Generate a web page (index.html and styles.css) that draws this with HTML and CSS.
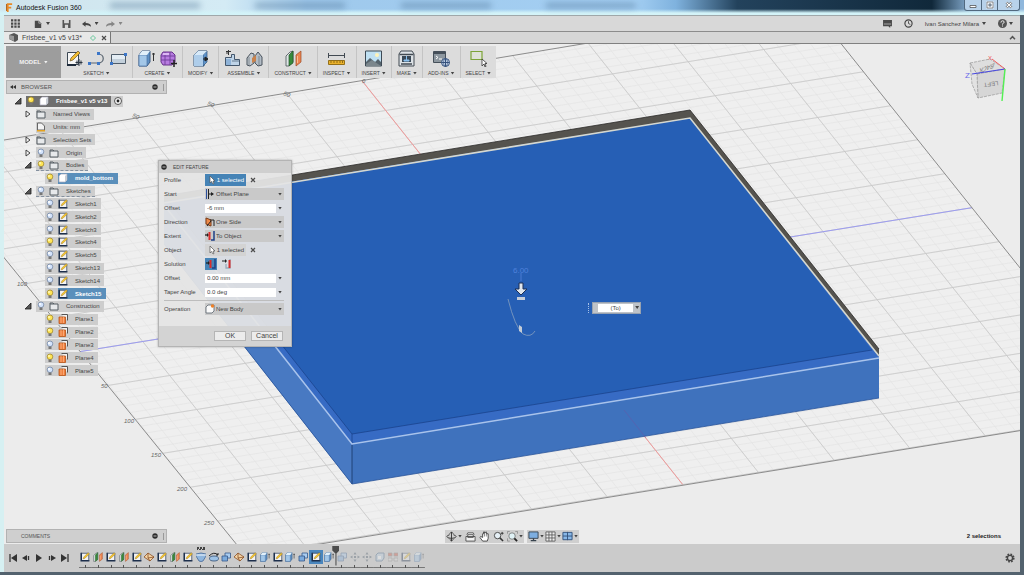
FILE: index.html
```html
<!DOCTYPE html>
<html lang="en">
<head>
	<meta charset="UTF-8">
	<title>Autodesk Fusion 360</title>
	<link rel="stylesheet" href="styles.css">
</head>

<body>

<svg class="sprite" aria-hidden="true">
	<symbol id="i-sketch" viewBox="0 0 16 16">
		<path d="M2 2h12v12H2z" fill="#f4f4f4"/><path d="M2 1v13h13" fill="none" stroke="#1d2f4c" stroke-width="2.500"/>
		<path d="M2 2h12v12" fill="none" stroke="#33435c" stroke-width="1.200"/><path d="M5 11l1-3 7-7 2 2-7 7z" fill="#f4c430" stroke="#8a6a1e" stroke-width=".6"/>
	</symbol>
	<symbol id="i-sketchbig" viewBox="0 0 17 17">
		<path d="M1.500 2.500h11v12h-11z" fill="#f6f6f6" stroke="#3c4854"/><path d="M1 15h9" stroke="#1d2a3a" stroke-width="2"/>
		<path d="M4 11l1-3 7-7 2 2-7 7z" fill="#f2bd31" stroke="#6b5422" stroke-width=".7"/>
		<path d="M13 9v7M9.500 12.500h7M11 10.500v4M15 10.500v4" stroke="#2d3742"/>
	</symbol>
	<symbol id="i-line" viewBox="0 0 17 17">
		<path d="M1 13h9c7 0 7-9 0-9" fill="none" stroke="#5a6570" stroke-width="1.200"/>
		<path d="M0 12h3v3H0zM9 12h3v3H9zM9 2h3v3H9z" fill="#3c76c8"/>
	</symbol>
	<symbol id="i-rect" viewBox="0 0 17 17">
		<path d="M1.500 4.500h14v9h-14z" fill="#e4edf4" stroke="#4e5c6a"/><path d="M2 9h13v4H2z" fill="#c3d0db"/>
		<path d="M0 12h3v3H0zM14 3h3v3h-3z" fill="#3c76c8"/>
	</symbol>
	<symbol id="i-extrude" viewBox="0 0 17 17">
		<path d="M1 5l3-4h8v11l-3 4H1z" fill="#5f90c4" stroke="#3c5c84"/><path d="M1 5h8v11H1z" fill="#a3c7e8" stroke="#4a74a4" stroke-width=".7"/>
		<path d="M1 5l3-4h8L9 5z" fill="#e2f0fa"/><path d="M15.500 3v8M14 4h3" stroke="#333"/>
	</symbol>
	<symbol id="i-form" viewBox="0 0 17 17">
		<path d="M3 2h9l3 3v7l-3 3H3l-2-3V5z" fill="#b77be0" stroke="#68338c"/>
		<path d="M1 6h14M1 10h14M5 2v13M10 2v13" stroke="#70409a" stroke-width=".9"/><path d="M3 3h6v2H3z" fill="#dcb8f4"/>
		<path d="M14 10v7M11 13.500h6" stroke="#222" stroke-width="1.500"/>
	</symbol>
	<symbol id="i-modify" viewBox="0 0 17 17">
		<path d="M2 5l4-4h9l-3 4v11H2z" fill="#5f93ca" stroke="#31547c"/><path d="M11 5l4-4v11l-4 4z" fill="#5f93ca" stroke="#31547c" stroke-width=".7"/><path d="M2 5h9v11H2z" fill="#aecdea"/>
		<path d="M2 5l4-4h9l-4 4z" fill="#d7e9f8"/><path d="M11 9h4M13 7l3 2-3 2z" stroke="#222" fill="#222"/>
	</symbol>
	<symbol id="i-assemble" viewBox="0 0 17 17">
		<path d="M1.500 7.500h6v-3h3v5h5v6h-14z" fill="#bfd4e8" stroke="#44576c"/><path d="M2 9h5v6H2z" fill="#8fb3d8"/>
		<path d="M2 1.500h5M4.500 0v5M3 1v3" stroke="#333"/><path d="M8 11h7" stroke="#44576c" stroke-width=".7"/>
	</symbol>
	<symbol id="i-joint" viewBox="0 0 17 17">
		<path d="M1 8l4-5 3 1v9l-4 3-3-1z" fill="#c3cad0" stroke="#49525c"/><path d="M9 6l3-4 4 5v8l-4 1-3-3z" fill="#b3bcc5" stroke="#49525c"/>
		<path d="M6 8l4-3v6l-4 2z" fill="#c9824c"/><path d="M3 7v8M13 6v9" stroke="#69727c" stroke-width=".7"/>
	</symbol>
	<symbol id="i-planes" viewBox="0 0 17 17">
		<path d="M1 6l4-4 3-1v11l-4 4H1z" fill="#dfe5e6" stroke="#465056" stroke-width=".8"/><path d="M4 5l4-4v12l-4 3z" fill="#378a3c" stroke="#245628" stroke-width=".7"/>
		<path d="M11 5l5-4v11l-5 4z" fill="#ec8450" stroke="#9c4b26" stroke-width=".7"/><path d="M12.500 6v7" stroke="#f8bb93"/>
	</symbol>
	<symbol id="i-measure" viewBox="0 0 17 17">
		<path d="M.500 3v5M16.500 3v5M1 5.500h15" stroke="#424a52"/><path d="M.500 10.500h16v4H.500z" fill="#eab22c" stroke="#94701a"/>
		<path d="M3 11v2M6 11v2M9 11v2M12 11v2M14.500 11v2" stroke="#6c4f10" stroke-width=".7"/>
	</symbol>
	<symbol id="i-image" viewBox="0 0 17 17">
		<path d="M.500 1h16v15H.500z" fill="#bfe0f2" stroke="#3d4a55"/><path d="M1 12l4-4 5 4 3-3 3 3v4H1z" fill="#56636c"/>
		<path d="M1 14l6-4 9 6H1z" fill="#7b868c"/><circle cx="12" cy="5" r="2" fill="#fff3b8"/>
	</symbol>
	<symbol id="i-make" viewBox="0 0 17 17">
		<path d="M1 4l2-3h11l2 3v12H1z" fill="#dde2e6" stroke="#424a52"/><path d="M1.500 4.500h14" stroke="#424a52" stroke-width="1.500"/>
		<path d="M4 6h9v6H4z" fill="#394856"/><path d="M8.500 6v4M6 10h5v1H6z" stroke="#8ac0ee" fill="#8ac0ee"/><path d="M3 14h11" stroke="#424a52" stroke-width="1.500"/>
	</symbol>
	<symbol id="i-addins" viewBox="0 0 17 17">
		<path d="M.500 1.500h12v11H.500z" fill="#8d979f" stroke="#46505a"/><path d="M1 2h11v2H1z" fill="#46505a"/>
		<path d="M3 6l2 1.500L3 9M6 9h3" stroke="#fff" fill="none"/><circle cx="12.500" cy="12.500" r="4" fill="#ccdcf0" stroke="#36527c"/>
		<path d="M8.500 12.500h8M12.500 8.500v8" stroke="#36527c"/><ellipse cx="12.500" cy="12.500" rx="2" ry="4" fill="none" stroke="#36527c" stroke-width=".7"/>
	</symbol>
	<symbol id="i-select" viewBox="0 0 17 17">
		<path d="M1 1.500h11v8H1z" fill="#e4eccf" fill-opacity=".4" stroke="#7da437" stroke-width="1.200"/><path d="M12 9v7l2-2 1 3 1-.500-1-3h2z" fill="#fff" stroke="#333" stroke-width=".8"/>
	</symbol>
	<symbol id="i-bulb-on" viewBox="0 0 10 10"><circle cx="5" cy="3.800" r="2.800" fill="#ffe557" stroke="#a38a2b" stroke-width=".8"/><path d="M3.500 6.500h3v2.500h-3z" fill="#777"/><circle cx="4" cy="3" r="1" fill="#fff8b8"/></symbol>
	<symbol id="i-bulb-off" viewBox="0 0 10 10"><circle cx="5" cy="3.800" r="2.800" fill="#d4e4fc" stroke="#7387a5" stroke-width=".8"/><path d="M3.500 6.500h3v2.500h-3z" fill="#777"/><circle cx="4" cy="3" r="1" fill="#fff"/></symbol>
	<symbol id="i-folder" viewBox="0 0 10 10"><path d="M1 2h3l1 1h4v6H1z" fill="#e7e9eb" stroke="#555c63"/><path d="M1 3h4" stroke="#555c63"/></symbol>
	<symbol id="i-units" viewBox="0 0 10 10"><path d="M1.500 1h4l3 3v4h-7z" fill="#f3f3f3" stroke="#666"/><path d="M1 8h8v1.500H1z" fill="#e4a21f"/></symbol>
	<symbol id="i-body" viewBox="0 0 10 10"><path d="M1 3l2-2h6v6L7 9H1z" fill="#fff" stroke="#aab" stroke-width=".7"/><path d="M7 3v6l2-2V1z" fill="#c8cdd4"/></symbol>
	<symbol id="i-plane" viewBox="0 0 10 10"><path d="M3.500.500h6v6" fill="#f2f2f2" stroke="#555"/><path d="M1 3h6.500v6.500H1z" fill="#f08040" stroke="#b85418" stroke-width=".8"/><path d="M3 3v6M5.500 3v6" stroke="#ffc69a" stroke-width=".6"/></symbol>
	<symbol id="i-target" viewBox="0 0 10 10"><circle cx="5" cy="5" r="3.500" fill="#f4f4f4" stroke="#333" stroke-width=".8"/><circle cx="5" cy="5" r="1.400" fill="#222"/></symbol>
	<symbol id="i-open" viewBox="0 0 8 8"><path d="M7 1v6H1z" fill="#555" stroke="#222" stroke-width=".8"/></symbol>
	<symbol id="i-closed" viewBox="0 0 8 8"><path d="M2 1l4 3-4 3z" fill="#f4f4f4" stroke="#333" stroke-width=".9"/></symbol>
	<symbol id="i-minus" viewBox="0 0 8 8"><circle cx="4" cy="4" r="2.700" fill="#2c2c2c"/><path d="M2.500 4h3" stroke="#ddd" stroke-width=".8"/></symbol>
	<symbol id="i-x" viewBox="0 0 8 8"><path d="M2 2l4 4M6 2L2 6" stroke="#4c4c4c" stroke-width="1.200"/></symbol>
	<symbol id="i-cursor" viewBox="0 0 10 10"><path d="M3 1v7l1.500-1.500L6 9l1-.500L6 6h2z" fill="#fff" stroke="#555" stroke-width=".7"/></symbol>
	<symbol id="i-start" viewBox="0 0 10 10"><path d="M1.500 0v10" stroke="#2a4f9c"/><path d="M3.500 0v10" stroke="#222"/><path d="M4 5h4" stroke="#222"/><path d="M6 3l3 2-3 2z" fill="#222"/></symbol>
	<symbol id="i-dir" viewBox="0 0 10 10"><path d="M1 1l5 2v6L1 7z" fill="#ee8a4a" stroke="#7c3b16"/><path d="M5 3h4v6" fill="none" stroke="#222"/><path d="M2 9l4-5" stroke="#222"/></symbol>
	<symbol id="i-extent" viewBox="0 0 10 10"><path d="M0 4h3" stroke="#222" stroke-width="1.300"/><path d="M2 2l2 2-2 2z" fill="#222"/><path d="M4.500 1v8" stroke="#d92c2c" stroke-width="2"/><path d="M6 9h3V0" fill="none" stroke="#1e3f86" stroke-width="1.500"/></symbol>
	<symbol id="i-extent2" viewBox="0 0 10 10"><path d="M0 2h4" stroke="#222"/><path d="M3 0l2 2-2 2z" fill="#222"/><path d="M4 5v4h4V0" fill="none" stroke="#9ab" stroke-width="1.300"/><path d="M7.500 1v8" stroke="#d92c2c" stroke-width="2"/></symbol>
	<symbol id="i-newbody" viewBox="0 0 10 10"><path d="M1 3l2-2h6v6L7 9H1z" fill="#fafafa" stroke="#59626c" stroke-width=".8"/><circle cx="7.500" cy="2" r="1.700" fill="#f08028"/></symbol>
	<symbol id="i-loft" viewBox="0 0 10 10"><path d="M0 2q5-2 10 0v2L7 9q-2 1-4 0L0 4z" fill="#8fb6de" stroke="#466a98" stroke-width=".8"/><path d="M0 3h10" stroke="#fff" stroke-width=".9"/></symbol>
	<symbol id="i-revolve" viewBox="0 0 10 10"><ellipse cx="5" cy="6.500" rx="4.500" ry="2.500" fill="#9dc2e6" stroke="#2f4d74" stroke-width=".8"/><path d="M0 4q5-5 9-1M9 1v2H7" stroke="#222" fill="none"/></symbol>
	<symbol id="i-combine" viewBox="0 0 10 10"><path d="M4 1h5.500v5H4z" fill="#aacdf0" stroke="#36588a" stroke-width=".8"/><path d="M1 4h5.500v5H1z" fill="#7cabdc" stroke="#36588a" stroke-width=".8"/></symbol>
	<symbol id="i-component" viewBox="0 0 10 10"><path d="M0 5l4-4 6 4-4 4z" fill="#f2d3a4" stroke="#8a4e25" stroke-width=".8"/><path d="M4 1v5l2 3M4 6l6-1" stroke="#8a4e25" fill="none" stroke-width=".8"/></symbol>
	<symbol id="i-move" viewBox="0 0 10 10"><path d="M5 0l1.500 2.500h-3zM5 10L3.500 7.500h3zM0 5l2.500-1.500v3zM10 5L7.500 3.500v3zM4 4h2v2H4z" fill="#445566"/></symbol>
	<symbol id="i-pattern" viewBox="0 0 10 10"><path d="M0 1h4v3H0zM6 1h4v3H6z" fill="#d6503c" stroke="#777" stroke-width=".7"/><path d="M0 6h4v3H0zM6 6h4v3H6z" fill="#ddd" stroke="#777" stroke-width=".7"/></symbol>
	<symbol id="i-shell" viewBox="0 0 10 10"><path d="M1 3l2-2h6v5L7 9H1z" fill="#bcd2e6" stroke="#44698c"/><path d="M3 4h3v3H3z" fill="#fff"/></symbol>
	<symbol id="i-orbit" viewBox="0 0 12 12"><path d="M6 1v10M4 3l2-2 2 2M4 9l2 2 2-2" stroke="#333" fill="none"/><path d="M4 4Q1 5 1 6q0 2 5 2t5-2q0-1-3-2" fill="none" stroke="#333"/></symbol>
	<symbol id="i-look" viewBox="0 0 12 12"><path d="M2 4l1-2h6l1 2M1 6h10v5H1zM3 4h6v3H3z" fill="#f2f2f2" stroke="#444" stroke-width=".9"/></symbol>
	<symbol id="i-pan" viewBox="0 0 12 12"><path d="M4 11L1 7l1-1 2 1V3h1V1h1v1l2-1v2h2v5l-1 3z" fill="#fff" stroke="#333" stroke-width=".9"/><path d="M6 2v4M8 3v3" stroke="#333" stroke-width=".6"/></symbol>
	<symbol id="i-zoom" viewBox="0 0 12 12"><circle cx="5" cy="5" r="3.500" fill="#e6f0f6" stroke="#444"/><path d="M7.500 7.500L11 11" stroke="#333" stroke-width="1.600"/><path d="M10 1v3M8.500 2.500h3" stroke="#333"/></symbol>
	<symbol id="i-fit" viewBox="0 0 12 12"><circle cx="5.500" cy="5.500" r="3.500" fill="#e0f2f6" stroke="#666" stroke-width=".8"/><path d="M8 8l3 3" stroke="#222" stroke-width="2"/><path d="M.500 3V.500H3M.500 8v3H3M11.500 3V.500H9" stroke="#777" stroke-width=".7" fill="none"/></symbol>
	<symbol id="i-display" viewBox="0 0 12 12"><path d="M1 1h10v7H1z" fill="#7daee0" stroke="#38434e"/><path d="M3 10.500h6M6 8v2" stroke="#38434e" stroke-width="1.400"/></symbol>
	<symbol id="i-grid" viewBox="0 0 12 12"><path d="M1 1h10v10H1zM1 4.300h10M1 7.600h10M4.300 1v10M7.600 1v10" fill="#eee" stroke="#555" stroke-width=".9"/></symbol>
	<symbol id="i-views" viewBox="0 0 12 12"><path d="M1 1.500h10v8H1z" fill="#88b8e8" stroke="#31527c"/><path d="M6 1v9M1 5.500h10" stroke="#31527c"/></symbol>
	<symbol id="i-gear" viewBox="0 0 12 12"><circle cx="6" cy="6" r="3.800" fill="none" stroke="#454545" stroke-width="1.600" stroke-dasharray="1.700 1.280"/><circle cx="6" cy="6" r="2.600" fill="none" stroke="#454545" stroke-width="1.400"/></symbol>
</svg>

<header class="titlebar">
	<svg class="logo" viewBox="0 0 8 10"><path d="M1 0h6v2H3v2h3v2H3v4H1z" fill="#e98a26"/><path d="M0 1h1v8H0z" fill="#a85a12"/></svg>
	<span class="apptitle">Autodesk Fusion 360</span>
	<div class="ghosts"><i></i><i></i><i></i><i></i></div>
	<div class="winbuttons">
		<button aria-label="Minimize"><svg viewBox="0 0 10 8"><path d="M2 4.500h6v2H2z" fill="#fff" stroke="#444" stroke-width=".7"/></svg></button>
		<button aria-label="Maximize"><svg viewBox="0 0 10 8"><path d="M2.500 1.500h5v5h-5z" fill="none" stroke="#fff" stroke-width="2"/><path d="M2 1h6v6H2zM4 3h2v2H4z" fill="none" stroke="#444" stroke-width=".6"/></svg></button>
		<button aria-label="Close"><svg viewBox="0 0 10 8"><path d="M2.500 1.500l5 5M7.500 1.500l-5 5" stroke="#444" stroke-width="2.400"/><path d="M2.500 1.500l5 5M7.500 1.500l-5 5" stroke="#fff" stroke-width="1.200"/></svg></button>
	</div>
</header>

<div class="app">
	<div class="quickbar">
		<button class="panel" aria-label="Data panel"><svg viewBox="0 0 10 10" width="9" height="9"><path d="M0 1.500h10M0 5h10M0 8.500h10" stroke="#4a4a4a" stroke-width="2.500" stroke-dasharray="2.500 1.200"/></svg></button>
		<button class="wide" aria-label="File"><svg viewBox="0 0 8 10" width="8" height="8"><path d="M0 1h5l3 3v6H0z" fill="#4a4a4a"/><path d="M5 1v3h3" stroke="#d8d8d8" fill="none" stroke-width=".8"/></svg><b class="caret"></b></button>
		<button class="wide" aria-label="Save"><svg viewBox="0 0 10 10" width="9" height="8"><path d="M0 0h10v10H0z" fill="#555"/><path d="M2 0h6v4H2zM3 6h4v4H3z" fill="#d8d8d8"/></svg></button>
		<button class="wide" aria-label="Undo"><svg viewBox="0 0 10 8" width="9" height="8"><path d="M0 4l4-3v2q6 0 6 4-2-2-6-2v2z" fill="#444"/></svg><b class="caret"></b></button>
		<button class="wide dim" aria-label="Redo"><svg viewBox="0 0 10 8" width="9" height="8"><path d="M10 4L6 1v2Q0 3 0 7q2-2 6-2v2z" fill="#444"/></svg><b class="caret"></b></button>
		<div class="account">
			<button aria-label="Comments"><svg viewBox="0 0 10 9" width="9" height="8"><path d="M0 0h10v7H8v2L6 7H0z" fill="#4a4a4a"/><path d="M1 4.500h8" stroke="#ccc" stroke-width=".8"/></svg></button>
			<button aria-label="Job status"><svg viewBox="0 0 10 10" width="9" height="9"><circle cx="5" cy="5" r="4" fill="none" stroke="#444" stroke-width="1.300"/><path d="M5 2.500V5l2 1" stroke="#444" fill="none"/></svg></button>
			<button class="user">Ivan Sanchez Milara <b class="caret"></b></button>
			<button aria-label="Help"><svg viewBox="0 0 10 10" width="9" height="9"><circle cx="5" cy="5" r="5" fill="#555"/><path d="M3.300 4q0-2 1.800-2t1.700 1.600Q6.800 4.600 5 5.300V6.200M5 7.200v1.200" stroke="#eee" fill="none" stroke-width="1.100"/></svg><b class="caret"></b></button>
		</div>
	</div>

	<nav class="tabs">
		<div class="tab">
			<svg viewBox="0 0 9 9" width="9" height="9"><path d="M0 2l5-2 4 2v5L6 9 0 6z" fill="#555"/><path d="M0 2l5 1v5L0 6z" fill="#999"/></svg>
			<a href="#">Frisbee_v1 v5 v13*</a>
			<svg viewBox="0 0 6 6" width="6" height="6"><path d="M3 .500L5.500 3 3 5.500.500 3z" fill="none" stroke="#66c79a"/></svg>
			<button aria-label="Close tab"><svg width="8" height="8"><use href="#i-x"/></svg></button>
		</div>
		<button class="collapse" aria-label="Collapse"><svg viewBox="0 0 8 6" width="7" height="5"><path d="M1 5l3-3 3 3" fill="none" stroke="#555" stroke-width="1.800"/></svg></button>
	</nav>

	<main class="viewport">
		<svg class="scene" viewBox="4 44 1016 500" preserveAspectRatio="xMidYMid slice">
			<clipPath id="floor"><path d="M-80 154L811 6 1135 412 246 556z"/></clipPath>
			<g clip-path="url(#floor)">
				<path d="M-80 154L811 6 1135 412 246 556z" fill="#efefef"/>
				<g transform="matrix(75.6 -12.200 27 34 520.700 280.500)" class="gridlines">
					<path id="minor" class="minor"/>
					<path id="major" class="major"/>
					<path class="axis-x" d="M0-6V6"/>
					<path class="axis-z" d="M-6 0H6"/>
				</g>
			</g>
			<path class="edge" d="M-80 154L811 6 1135 412 246 556z"/>
			<g class="ruler">
				<text x="362" y="83">0</text>
				<text transform="translate(283 95) rotate(20)">50</text>
				<text transform="translate(207 105) rotate(20)">50</text>
				<text transform="translate(132 117) rotate(20)">50</text>
				<text x="17" y="286">100</text>
				<text x="101" y="388">50</text>
				<text x="124" y="423">100</text>
				<text x="151" y="457">150</text>
				<text x="177" y="491">200</text>
				<text x="204" y="525">250</text>
			</g>

			<!-- mold body -->
			<path d="M164 196L690 110 879 349v8L690 119 164 204z" fill="#55534e"/>
			<path d="M164 196L690 110 879 349" fill="none" stroke="#2b2a28" stroke-width=".8"/>
			<path d="M164 202L690 118 879 357v41L352 484 164 244z" fill="#3f72bd"/>
			<path d="M164 202L352 443v41L164 244z" fill="#4879c2"/>
			<path d="M164 202L690 118 879 357 352 443z" fill="#376bc4"/>
			<path d="M164 202L690 118 872 350 352 434 170 203z" fill="#265fb5"/>
			<path d="M872 350L352 434 170 203M352 434v10" fill="none" stroke="#183f86" stroke-width=".7"/>
			<path d="M164 203L690 118 879 356" fill="none" stroke="#d6d8d0" stroke-width="1.600"/>
			<path d="M164 205L352 444 879 358" fill="none" stroke="#a9c3ec" stroke-width="1.500"/>
			<path d="M352 445v39" stroke="#173664" stroke-width=".8"/>
			<path d="M879 398L352 484 164 244" fill="none" stroke="#2a549a" stroke-width=".8"/>
			<path d="M624 410l22 28" stroke="#7a4a9c" stroke-width=".7" opacity=".5"/>

			<!-- extrude manipulator -->
			<text x="513" y="273" class="dim-text">6.00</text>
			<path d="M521 273v8" stroke="#5b8be0" stroke-width=".7"/>
			<path d="M519 283h4v6h4l-6 6-6-6h4z" fill="#dfe6ee" stroke="#1c2f52"/>
			<path d="M517 297h8v3h-8z" fill="#c5cdd8"/>
			<path d="M508 299q7 28 15 35 8 4 12-3" fill="none" stroke="#86a0bf" stroke-width=".8"/>
			<path d="M519 325l3 2v6l-3-2z" fill="#c4ccd6"/>

			<!-- view cube -->
			<g class="cube">
				<path d="M970 63l20-4 15 10-28 5z" fill="#dedede"/>
				<path d="M977 74l28-5-3 24-24 5z" fill="#d6d6d6"/>
				<path d="M970 63l7 11 1 24-6-14z" fill="#e2e2e2"/>
			</g>
			<text class="face" transform="translate(998 81) rotate(172)">LEFT</text>
			<text class="face" transform="translate(995 63) rotate(160) skewX(-40)">BACK</text>
			<path d="M992 59l13 10" stroke="#f06060"/><path d="M972 74l33-5" stroke="#4a4ae0" stroke-width="1.200"/><path d="M1005 69l-3 32" stroke="#53f053" stroke-width="1.400"/>
			<text x="988" y="60" class="ax" fill="#f06060">X</text><text x="965" y="78" class="ax big" fill="#6a6ae8">Z</text>
		</svg>

		<div class="ribbon">
			<button class="model">MODEL <b class="caret"></b></button>
			<div class="group"><div class="tools"><button aria-label="Create sketch"><svg><use href="#i-sketchbig"/></svg></button><button aria-label="Line"><svg><use href="#i-line"/></svg></button><button aria-label="Rectangle"><svg><use href="#i-rect"/></svg></button></div><button class="menu">SKETCH <b class="caret"></b></button></div>
			<div class="group"><div class="tools"><button aria-label="Extrude"><svg><use href="#i-extrude"/></svg></button><button aria-label="Form"><svg><use href="#i-form"/></svg></button></div><button class="menu">CREATE <b class="caret"></b></button></div>
			<div class="group"><div class="tools"><button aria-label="Press pull"><svg><use href="#i-modify"/></svg></button></div><button class="menu">MODIFY <b class="caret"></b></button></div>
			<div class="group"><div class="tools"><button aria-label="New component"><svg><use href="#i-assemble"/></svg></button><button aria-label="Joint"><svg><use href="#i-joint"/></svg></button></div><button class="menu">ASSEMBLE <b class="caret"></b></button></div>
			<div class="group"><div class="tools"><button aria-label="Offset plane"><svg><use href="#i-planes"/></svg></button></div><button class="menu">CONSTRUCT <b class="caret"></b></button></div>
			<div class="group"><div class="tools"><button aria-label="Measure"><svg><use href="#i-measure"/></svg></button></div><button class="menu">INSPECT <b class="caret"></b></button></div>
			<div class="group"><div class="tools"><button aria-label="Insert image"><svg><use href="#i-image"/></svg></button></div><button class="menu">INSERT <b class="caret"></b></button></div>
			<div class="group"><div class="tools"><button aria-label="3D print"><svg><use href="#i-make"/></svg></button></div><button class="menu">MAKE <b class="caret"></b></button></div>
			<div class="group"><div class="tools"><button aria-label="Scripts"><svg><use href="#i-addins"/></svg></button></div><button class="menu">ADD-INS <b class="caret"></b></button></div>
			<div class="group"><div class="tools"><button aria-label="Select"><svg><use href="#i-select"/></svg></button></div><button class="menu">SELECT <b class="caret"></b></button></div>
		</div>

		<section class="browser">
			<div class="palette"><span class="rewind"></span><span class="name">BROWSER</span><svg><use href="#i-minus"/></svg><i class="grip"></i></div>
			<ul class="tree">
				<li><svg class="tw"><use href="#i-open"/></svg><span class="node root"><svg><use href="#i-bulb-on"/></svg><svg><use href="#i-body"/></svg>Frisbee_v1 v5 v13</span><span class="node end"><svg><use href="#i-target"/></svg></span></li>
				<li class="l1"><svg class="tw"><use href="#i-closed"/></svg><span class="node"><svg><use href="#i-folder"/></svg>Named Views</span></li>
				<li class="l1"><svg class="tw"></svg><span class="node"><svg><use href="#i-units"/></svg>Units: mm</span></li>
				<li class="l1"><svg class="tw"><use href="#i-closed"/></svg><span class="node"><svg><use href="#i-folder"/></svg>Selection Sets</span></li>
				<li class="l1"><svg class="tw"><use href="#i-closed"/></svg><span class="node"><svg><use href="#i-bulb-off"/></svg><svg><use href="#i-folder"/></svg>Origin</span></li>
				<li class="l1"><svg class="tw"><use href="#i-open"/></svg><span class="node hatch"><svg><use href="#i-bulb-on"/></svg><svg><use href="#i-folder"/></svg>Bodies</span></li>
				<li class="l2"><span class="node"><svg><use href="#i-bulb-on"/></svg></span><span class="node picked"><svg><use href="#i-body"/></svg>mold_bottom</span></li>
				<li class="l1"><svg class="tw"><use href="#i-open"/></svg><span class="node hatch"><svg><use href="#i-bulb-off"/></svg><svg><use href="#i-folder"/></svg>Sketches</span></li>
				<li class="l2"><span class="node"><svg><use href="#i-bulb-off"/></svg><svg><use href="#i-sketch"/></svg>Sketch1</span></li>
				<li class="l2"><span class="node"><svg><use href="#i-bulb-off"/></svg><svg><use href="#i-sketch"/></svg>Sketch2</span></li>
				<li class="l2"><span class="node"><svg><use href="#i-bulb-off"/></svg><svg><use href="#i-sketch"/></svg>Sketch3</span></li>
				<li class="l2"><span class="node"><svg><use href="#i-bulb-on"/></svg><svg><use href="#i-sketch"/></svg>Sketch4</span></li>
				<li class="l2"><span class="node"><svg><use href="#i-bulb-off"/></svg><svg><use href="#i-sketch"/></svg>Sketch5</span></li>
				<li class="l2"><span class="node"><svg><use href="#i-bulb-off"/></svg><svg><use href="#i-sketch"/></svg>Sketch13</span></li>
				<li class="l2"><span class="node"><svg><use href="#i-bulb-off"/></svg><svg><use href="#i-sketch"/></svg>Sketch14</span></li>
				<li class="l2"><span class="node"><svg><use href="#i-bulb-on"/></svg></span><span class="node picked"><svg><use href="#i-sketch"/></svg>Sketch15</span></li>
				<li class="l1"><svg class="tw"><use href="#i-open"/></svg><span class="node"><svg><use href="#i-bulb-off"/></svg><svg><use href="#i-folder"/></svg>Construction</span></li>
				<li class="l2"><span class="node"><svg><use href="#i-bulb-on"/></svg><svg><use href="#i-plane"/></svg>Plane1</span></li>
				<li class="l2"><span class="node"><svg><use href="#i-bulb-on"/></svg><svg><use href="#i-plane"/></svg>Plane2</span></li>
				<li class="l2"><span class="node"><svg><use href="#i-bulb-off"/></svg><svg><use href="#i-plane"/></svg>Plane3</span></li>
				<li class="l2"><span class="node"><svg><use href="#i-bulb-on"/></svg><svg><use href="#i-plane"/></svg>Plane4</span></li>
				<li class="l2"><span class="node"><svg><use href="#i-bulb-off"/></svg><svg><use href="#i-plane"/></svg>Plane5</span></li>
			</ul>
		</section>

		<form class="dialog">
			<div class="dialog-head"><svg><use href="#i-minus"/></svg>EDIT FEATURE</div>
			<div class="fields">
				<div class="row"><label for="profile">Profile</label><button type="button" id="profile" class="pick on"><svg><use href="#i-cursor"/></svg>1 selected</button><button type="button" class="clear" aria-label="Clear profile"><svg><use href="#i-x"/></svg></button></div>
				<div class="row"><label for="start">Start</label><div class="drop"><svg><use href="#i-start"/></svg><select id="start"><option>Offset Plane</option></select><b class="caret"></b></div></div>
				<div class="row"><label for="offset">Offset</label><input id="offset" value="-6 mm"><b class="caret"></b></div>
				<div class="row"><label for="direction">Direction</label><div class="drop"><svg><use href="#i-dir"/></svg><select id="direction"><option>One Side</option></select><b class="caret"></b></div></div>
				<div class="row"><label for="extent">Extent</label><div class="drop"><svg><use href="#i-extent"/></svg><select id="extent"><option>To Object</option></select><b class="caret"></b></div></div>
				<div class="row"><label for="object">Object</label><button type="button" id="object" class="pick"><svg><use href="#i-cursor"/></svg>1 selected</button><button type="button" class="clear" aria-label="Clear object"><svg><use href="#i-x"/></svg></button></div>
				<div class="row"><label for="solution">Solution</label><button type="button" id="solution" class="sol on" aria-label="Minimum solution"><svg><use href="#i-extent"/></svg></button><button type="button" class="sol" aria-label="Maximum solution"><svg><use href="#i-extent2"/></svg></button></div>
				<div class="row"><label for="offset2">Offset</label><input id="offset2" value="0.00 mm"><b class="caret"></b></div>
				<div class="row"><label for="taper">Taper Angle</label><input id="taper" value="0.0 deg"><b class="caret"></b></div>
				<div class="row last"><label for="operation">Operation</label><div class="drop"><svg><use href="#i-newbody"/></svg><select id="operation"><option>New Body</option></select><b class="caret"></b></div></div>
			</div>
			<div class="dialog-foot"><button type="button">OK</button><button type="button">Cancel</button></div>
		</form>

		<div class="inplace"><i class="dots"></i><div class="box"><input aria-label="Extent" value="(To)"><b class="caret"></b></div></div>

		<div class="bottom">
			<div class="palette"><span class="name">COMMENTS</span><svg><use href="#i-minus"/></svg><i class="grip"></i></div>
			<div class="navs">
				<div class="nav"><button aria-label="Orbit"><svg><use href="#i-orbit"/></svg><b class="caret"></b></button><button aria-label="Look at"><svg><use href="#i-look"/></svg></button><button aria-label="Pan"><svg><use href="#i-pan"/></svg></button><button aria-label="Zoom"><svg><use href="#i-zoom"/></svg></button><button aria-label="Fit"><svg><use href="#i-fit"/></svg><b class="caret"></b></button></div>
				<div class="nav tight"><button aria-label="Display"><svg><use href="#i-display"/></svg><b class="caret"></b></button><button aria-label="Grid"><svg><use href="#i-grid"/></svg><b class="caret"></b></button><button aria-label="Viewports"><svg><use href="#i-views"/></svg><b class="caret"></b></button></div>
			</div>
			<div class="status">2 selections</div>
		</div>
	</main>

	<footer class="timeline">
		<div class="play">
			<button aria-label="First"><svg viewBox="0 0 8 8"><path d="M1 0v8" stroke="#333" stroke-width="1.300"/><path d="M8 0v8L2 4z" fill="#333"/></svg></button>
			<button aria-label="Previous"><svg viewBox="0 0 8 8"><path d="M5 1v6L0 4z" fill="#333"/><path d="M6.500 2v4" stroke="#333" stroke-width="1.300"/></svg></button>
			<button aria-label="Play"><svg viewBox="0 0 8 8"><path d="M1 0l6 4-6 4z" fill="#333"/></svg></button>
			<button aria-label="Next"><svg viewBox="0 0 8 8"><path d="M3 1v6l5-3z" fill="#333"/><path d="M1.500 2v4" stroke="#333" stroke-width="1.300"/></svg></button>
			<button aria-label="Last"><svg viewBox="0 0 8 8"><path d="M7 0v8" stroke="#333" stroke-width="1.300"/><path d="M0 0v8l6-4z" fill="#333"/></svg></button>
		</div>
		<ol class="track" id="track"></ol>
		<button class="gear" aria-label="Settings"><svg><use href="#i-gear"/></svg></button>
	</footer>
</div>

<script src="app.js"></script>
</body>

</html>
```

FILE: styles.css
```css
*{
	box-sizing: border-box;
}
body{
	margin: 0;
	height: 100vh;
	display: flex;
	flex-direction: column;
	overflow: hidden;
	font: 6px/8px "Liberation Sans", Arial, sans-serif;
	color: #444;
	background: #53626e;
}
button, input, select{
	font: inherit;
	color: inherit;
	margin: 0;
	padding: 0;
	border: 0;
	background: none;
}
button{
	display: flex;
	align-items: center;
	justify-content: center;
}
a{
	color: inherit;
	text-decoration: none;
}
svg{
	display: block;
	flex: none;
}
.sprite{
	position: absolute;
	width: 0;
	height: 0;
}
.caret{
	display: block;
	flex: none;
	width: 4px;
	height: 3px;
	background: currentColor;
	clip-path: polygon(0 0, 100% 0, 50% 100%);
}

/* window frame */
.titlebar{
	height: 15px;
	flex: none;
	display: flex;
	align-items: flex-start;
	position: relative;
	padding-left: 6px;
	background:
		linear-gradient(to bottom, transparent 9px, #d3f3f8 13px),
		linear-gradient(to right, #cfe4ec 0, #d4ebf5 22%, #9fc9ec 30%, #a4cff3 62%, #7fb2de 66%, #23425c 72%, #10283a 91%, #8fb7dc 95%);
}
.logo{
	width: 7px;
	height: 9px;
	margin: 3px 3px 0 0;
}
.apptitle{
	font-size: 7px;
	line-height: 15px;
	color: #111;
	z-index: 1;
}
.ghosts{
	flex: 1;
	display: flex;
	justify-content: space-around;
	padding-right: 300px;
	filter: blur(3px);
}
.ghosts i{
	width: 90px;
	height: 5px;
	margin-top: 3px;
	background: #4a6f92;
	opacity: .5;
}
.winbuttons{
	display: flex;
	margin-right: 4px;
	border: 1px solid #51697f;
	border-top: 0;
	border-radius: 0 0 3px 3px;
	background: #b8d2ea;
}
.winbuttons button{
	width: 16px;
	height: 10px;
}
.winbuttons button:last-child{
	width: 22px;
}
.winbuttons button + button{
	border-left: 1px solid #51697f;
}
.winbuttons svg{
	width: 10px;
	height: 8px;
}
.app{
	flex: 1;
	min-height: 0;
	display: flex;
	flex-direction: column;
	margin-bottom: 3px;
	border-left: 4px solid #d6f0f2;
	border-right: 4px solid #53626e;
}

/* top bars */
.quickbar{
	height: 17px;
	flex: none;
	display: flex;
	align-items: center;
	padding: 0 7px 0 7px;
	background: #d8d8d8;
	border-top: 1px solid #a0a8aa;
	border-bottom: 1px solid #8c8c8c;
}
.quickbar button{
	gap: 4px;
}
.quickbar .panel{
	margin-right: 10px;
}
.quickbar .wide{
	width: 24px;
}
.quickbar .dim{
	opacity: .55;
}
.account{
	margin-left: auto;
	display: flex;
	align-items: center;
	gap: 12px;
}
.account button{
	gap: 2px;
}
.account .user{
	gap: 3px;
}
.tabs{
	height: 12px;
	flex: none;
	display: flex;
	justify-content: space-between;
	background: #d6d6d6;
	border-bottom: 1px solid #808080;
}
.tab{
	display: flex;
	align-items: center;
	gap: 4px;
	padding: 0 2px 0 5px;
	background: #e8e8e8;
	border-right: 1px solid #777;
}
.tab a{
	font-size: 7px;
	padding-right: 4px;
}
.collapse{
	width: 16px;
}

/* canvas */
.viewport{
	flex: 1;
	min-height: 0;
	position: relative;
	display: flex;
	flex-direction: column;
	align-items: flex-start;
	padding: 2px 2px 1px;
	background: #ececec;
}
.scene{
	position: absolute;
	inset: 0;
	width: 100%;
	height: 100%;
}
.ribbon, .browser, .bottom{
	position: relative;
}
.gridlines path{
	fill: none;
	vector-effect: non-scaling-stroke;
}
.minor{
	stroke: #e3e3e3;
	stroke-width: .6px;
}
.major{
	stroke: #c8c8c8;
	stroke-width: .8px;
}
.gridlines .axis-x{
	stroke: #f29a9a;
	stroke-width: 1px;
}
.gridlines .axis-z{
	stroke: #9c9cf0;
	stroke-width: 1px;
}
.edge{
	fill: none;
	stroke: #808080;
	stroke-width: .9px;
}
.ruler{
	font-size: 6px;
	font-style: italic;
	fill: #666;
}
.dim-text{
	font-size: 8px;
	fill: #4f82dc;
}
.cube path{
	stroke: #a0a0a0;
	stroke-width: .8px;
	stroke-dasharray: 3 1;
}
.face{
	font-size: 6px;
	fill: #777;
}
.ax{
	font-size: 6px;
}
.ax.big{
	font-size: 8px;
}

/* ribbon */
.ribbon{
	height: 32px;
	flex: none;
	display: flex;
	background: #dcdcdc;
	font-size: 5px;
}
.model{
	width: 55px;
	gap: 3px;
	background: #9d9d9d;
	color: #f2f2f2;
	font-size: 6px;
	font-weight: bold;
}
.group{
	display: flex;
	flex-direction: column;
	align-items: center;
	justify-content: space-between;
	padding: 4px 5px 1px;
}
.group + .group{
	border-left: 1px solid #c4c4c4;
}
.tools{
	display: flex;
	gap: 5px;
}
.tools svg{
	width: 17px;
	height: 17px;
}
.menu{
	gap: 2px;
}

/* palettes */
.palette{
	width: 161px;
	height: 14px;
	display: flex;
	align-items: center;
	padding: 0 2px 0 14px;
	background: #cfcfcf;
	border: 1px solid #b2b2b2;
	font-size: 5px;
	color: #555;
}
.palette svg{
	width: 8px;
	height: 8px;
	margin-left: auto;
}
.rewind{
	width: 6px;
	height: 4px;
	margin: 0 5px 0 -11px;
	background: #333;
	clip-path: polygon(0 50%, 50% 0, 50% 50%, 100% 0, 100% 100%, 50% 50%, 50% 100%);
}
.grip{
	width: 2px;
	height: 7px;
	margin-left: 3px;
	border: 1px solid #999;
	border-width: 0 1px 0 0;
}
.browser{
	margin-top: 2px;
}
.browser .name{
	font-size: 6px;
}
.tree{
	list-style: none;
	margin: 1px 0 0;
	padding: 0 0 0 8px;
	height: 282px;
	display: grid;
	grid-template-rows: repeat(22, 1fr);
}
.tree li{
	display: flex;
	align-items: center;
}
.tree .l1{
	padding-left: 10px;
}
.tree .l2{
	padding-left: 31px;
}
.tw{
	width: 8px;
	height: 8px;
	margin-right: 4px;
}
.node{
	height: 11px;
	display: flex;
	align-items: center;
	gap: 3px;
	padding: 0 4px 0 0;
	background: #cdcdcd;
}
.node svg{
	width: 10px;
	height: 10px;
}
.node svg:last-of-type{
	margin-right: 4px;
}
.root{
	background: #6f6f6f;
	color: #fff;
	font-weight: bold;
}
.node.end{
	padding: 0 0 0 2px;
}
.node.end svg{
	margin: 0;
}
.l2 .node:not(:last-child){
	padding: 0;
}
.l2 .node:not(:last-child) svg{
	margin-right: 3px;
}
.picked{
	background: #5a8fbb;
	color: #fff;
	font-weight: bold;
	padding-right: 5px;
}
.hatch{
	border-bottom: 1px dashed #8591a0;
}

/* edit feature dialog */
.dialog{
	position: absolute;
	left: 154px;
	top: 116px;
	width: 134px;
	background: rgba(228, 228, 228, .94);
	border: 1px solid #b4b4b4;
	box-shadow: 0 0 2px rgba(0, 0, 0, .3);
}
.dialog svg{
	width: 10px;
	height: 10px;
}
.dialog-head{
	height: 12px;
	display: flex;
	align-items: center;
	gap: 5px;
	padding-left: 1px;
	font-size: 5px;
	background: #cfcfcf;
}
.dialog-head svg{
	width: 8px;
	height: 8px;
}
.fields{
	padding: 0 7px 10px 5px;
}
.row{
	height: 14px;
	display: flex;
	align-items: center;
}
.row label{
	width: 41px;
	flex: none;
}
.row.last{
	height: 16px;
	margin-top: 1px;
	padding-top: 1px;
	border-top: 1px solid #bdbdbd;
}
.drop{
	flex: 1;
	height: 12px;
	display: flex;
	align-items: center;
	gap: 1px;
	padding-right: 2px;
	background: #c9c9c9;
}
.drop select{
	flex: 1;
	min-width: 0;
	height: 12px;
	appearance: none;
}
.row input{
	flex: 1;
	min-width: 0;
	height: 9px;
	padding-left: 2px;
	margin-right: 2px;
	background: #fff;
}
.row input + .caret{
	margin-right: 2px;
}
.pick{
	width: 41px;
	height: 12px;
	background: #d3d3d3;
}
.sol{
	width: 12px;
	height: 12px;
	margin-right: 4px;
}
.pick.on, .sol.on{
	background: #4583b6;
	color: #fff;
}
.clear{
	width: 14px;
}
.clear svg{
	width: 8px;
	height: 8px;
}
.dialog-foot{
	height: 20px;
	display: flex;
	align-items: center;
	justify-content: flex-end;
	gap: 5px;
	padding-right: 8px;
	background: #d3d3d3;
}
.dialog-foot button{
	width: 32px;
	height: 10px;
	background: #ececec;
	border: 1px solid #b5b5b5;
	font-size: 7px;
}

/* value box beside the manipulator */
.inplace{
	position: absolute;
	left: 57.5%;
	top: 51.5%;
	display: flex;
	align-items: center;
	gap: 2px;
}
.dots{
	width: 2px;
	height: 10px;
	border-left: 1px dotted #a6c0e6;
}
.box{
	width: 49px;
	height: 12px;
	display: flex;
	align-items: center;
	justify-content: space-between;
	padding: 0 1px 0 5px;
	background: #bfc3c8;
	border: 1px solid #98a2b0;
}
.box input{
	width: 35px;
	height: 8px;
	background: #fff;
	text-align: center;
}

/* bottom of the canvas */
.bottom{
	width: 100%;
	margin-top: auto;
	display: grid;
	grid-template-columns: 1fr auto 1fr;
	align-items: center;
}
.navs{
	display: flex;
	gap: 3px;
}
.nav{
	height: 13px;
	display: flex;
	align-items: center;
	gap: 3px;
	padding: 0 1px;
	background: #cfcfcf;
}
.nav.tight{
	gap: 1px;
}
.nav button{
	gap: 1px;
}
.nav svg{
	width: 11px;
	height: 11px;
}
.status{
	justify-self: end;
	padding-right: 17px;
	font-weight: bold;
	color: #222;
}

/* timeline */
.timeline{
	height: 28px;
	flex: none;
	display: flex;
	align-items: center;
	padding: 0 4px 0 5px;
	background: #cbcbcb;
}
.play{
	display: flex;
	gap: 5px;
}
.play svg{
	width: 8px;
	height: 8px;
}
.play button{
	width: 8px;
}
.track{
	list-style: none;
	margin: 0 0 0 10px;
	padding: 0;
	width: 346px;
	display: grid;
	grid-template-columns: repeat(27, 1fr);
}
.track li{
	position: relative;
	height: 19px;
	display: flex;
	justify-content: center;
	padding-top: 3px;
	background:
		linear-gradient(#555, #555) center bottom / 1px 3px no-repeat,
		linear-gradient(#777, #777) center bottom / 100% 1px no-repeat;
}
.track svg{
	width: 10px;
	height: 10px;
}
.track .future svg{
	opacity: .35;
}
.track .current svg{
	outline: 2px solid #4a86bd;
	background: #4a86bd;
}
.track .flag::before{
	content: "";
	position: absolute;
	top: -2px;
	width: 8px;
	height: 3px;
	background: repeating-linear-gradient(110deg, #444 0 2px, transparent 2px 3px);
}
.marker{
	position: absolute;
	right: -4px;
	top: -3px;
	width: 7px;
	height: 20px;
	background: #4c4c4c;
	clip-path: polygon(0 0, 100% 0, 100% 25%, 60% 40%, 60% 100%, 45% 100%, 45% 40%, 0 25%);
}
.gear{
	margin-left: auto;
}
.gear svg{
	width: 12px;
	height: 12px;
}
```

FILE: app.js
```javascript
/* floor grid, one unit = one major cell */
function gridPath(step){
	var d = "";
	var n = Math.round(6 / step);
	for(var i = -n; i <= n; i++){
		var p = i * step;
		d += "M" + p + " -6V6M-6 " + p + "H6";
	}
	return d;
}

document.getElementById("minor").setAttribute("d", gridPath(0.2));
document.getElementById("major").setAttribute("d", gridPath(1));

/* timeline features in order */
var features = ["sketch", "planes", "sketch", "planes", "sketch", "component", "sketch", "planes", "sketch",
	"loft", "revolve", "combine", "component", "sketch", "extrude", "sketch", "extrude", "combine",
	"sketch", "extrude", "combine", "move", "move", "shell", "pattern", "sketch", "extrude"];
var current = 18;

var html = "";
for(var i = 0; i < features.length; i++){
	var cls = "";
	if(i == current) cls = "current";
	if(i > current + 1) cls = "future";
	if(i == 9) cls = "flag";
	html += '<li class="' + cls + '"><svg><use href="#i-' + features[i] + '"/></svg>';
	if(i == current + 1) html += '<i class="marker"></i>';
	html += '</li>';
}
document.getElementById("track").innerHTML = html;
```
